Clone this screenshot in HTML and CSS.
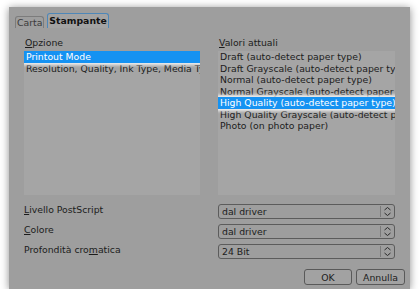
FILE: index.html
```html
<!DOCTYPE html>
<html lang="it">
<head>
    <meta charset="UTF-8">
    <title>Stampante</title>
    <link rel="stylesheet" href="styles.css">
</head>
<body>

    <div class="dialog">
        <div class="tabs">
            <div class="tab">Carta</div>
            <div class="tab active">Stampante</div>
        </div>

        <div class="pane">
            <div class="columns">
                <div class="col">
                    <div class="label"><u>O</u>pzione</div>
                    <div class="list">
                        <div class="row selected">Printout Mode</div>
                        <div class="row">Resolution, Quality, Ink Type, Media Type</div>
                    </div>
                </div>
                <div class="col">
                    <div class="label"><u>V</u>alori attuali</div>
                    <div class="list">
                        <div class="row">Draft (auto-detect paper type)</div>
                        <div class="row">Draft Grayscale (auto-detect paper type)</div>
                        <div class="row">Normal (auto-detect paper type)</div>
                        <div class="row">Normal Grayscale (auto-detect paper type)</div>
                        <div class="row selected">High Quality (auto-detect paper type)</div>
                        <div class="row">High Quality Grayscale (auto-detect paper type)</div>
                        <div class="row">Photo (on photo paper)</div>
                    </div>
                </div>
            </div>

            <div class="settings">
                <div class="setting-label"><u>L</u>ivello PostScript</div>
                <div class="combo"><span>dal driver</span><div class="spin"><svg width="9" height="11" viewBox="0 0 9 11"><path d="M1.5 4 L4.5 1.5 L7.5 4 M1.5 7 L4.5 9.5 L7.5 7" fill="none" stroke="#2a2a2a" stroke-width="1"/></svg></div></div>

                <div class="setting-label"><u>C</u>olore</div>
                <div class="combo"><span>dal driver</span><div class="spin"><svg width="9" height="11" viewBox="0 0 9 11"><path d="M1.5 4 L4.5 1.5 L7.5 4 M1.5 7 L4.5 9.5 L7.5 7" fill="none" stroke="#2a2a2a" stroke-width="1"/></svg></div></div>

                <div class="setting-label">Profondità cro<u>m</u>atica</div>
                <div class="combo"><span>24 Bit</span><div class="spin"><svg width="9" height="11" viewBox="0 0 9 11"><path d="M1.5 4 L4.5 1.5 L7.5 4 M1.5 7 L4.5 9.5 L7.5 7" fill="none" stroke="#2a2a2a" stroke-width="1"/></svg></div></div>
            </div>
        </div>

        <div class="actions">
            <button class="ok">OK</button>
            <button class="cancel">Annulla</button>
        </div>
    </div>

</body>
</html>
```

FILE: styles.css
```css
body {
    margin: 0;
    background: #ffffff;
    font-family: "DejaVu Sans", sans-serif;
    font-size: 9.3px;
    color: #1c1c1c;
}

.dialog {
    margin: 7px 0 0 9px;
    width: 401px;
    height: 282px;
    background: #9e9e9e;
    box-shadow: 0 1px 8px rgba(0, 0, 0, 0.45);
    box-sizing: border-box;
    padding-top: 6px;
    display: flex;
    flex-direction: column;
}

.tabs {
    display: flex;
    align-items: flex-end;
    height: 15px;
    padding-left: 6px;
    gap: 3px;
}

.tab {
    height: 11px;
    line-height: 11px;
    padding: 0 1px;
    border: 1px solid #7c7c7c;
    border-bottom: none;
    border-radius: 3px 3px 0 0;
    color: #3a3a3a;
}

.tab.active {
    height: 14px;
    line-height: 14px;
    padding: 0 1px;
    font-weight: bold;
    color: #111;
    background: #a3a3a3;
    border-color: #4e87b8;
}

.pane {
    padding: 0 0 0 15px;
}

.columns {
    display: grid;
    grid-template-columns: 176px 177px;
    column-gap: 18px;
    margin-top: 9px;
}

.label {
    height: 11px;
    line-height: 11px;
    padding-left: 1px;
    margin-bottom: 3px;
}

.list {
    height: 144px;
    background: #a5a5a5;
    overflow: hidden;
}

.row {
    height: 11.5px;
    line-height: 11.5px;
    padding-left: 2px;
    white-space: nowrap;
}

.row.selected {
    background: #1592f2;
    color: #fff;
    box-shadow: 0 0 3px 2px rgba(255, 255, 255, 0.85);
    position: relative;
}

.settings {
    display: grid;
    grid-template-columns: 176px 177px;
    column-gap: 18px;
    row-gap: 5px;
    margin-top: 9px;
}

.setting-label {
    height: 15px;
    line-height: 11px;
}

.combo {
    height: 15px;
    box-sizing: border-box;
    border: 1px solid #5c5c5c;
    border-radius: 3px;
    display: flex;
    align-items: center;
}

.combo span {
    flex: 1;
    padding-left: 3px;
}

.spin {
    width: 13px;
    height: 11px;
    border-left: 1px solid #7a7a7a;
    display: flex;
    justify-content: center;
    align-items: center;
}

.actions {
    display: flex;
    justify-content: flex-end;
    gap: 4px;
    padding-right: 5px;
    margin-top: 10px;
}

button {
    height: 16px;
    box-sizing: border-box;
    border: 1px solid #595959;
    border-radius: 3px;
    background: #a2a2a2;
    font-family: "DejaVu Sans", sans-serif;
    font-size: 9.3px;
    color: #1c1c1c;
    padding: 0;
}

.ok {
    width: 48px;
}

.cancel {
    width: 49px;
}
```
